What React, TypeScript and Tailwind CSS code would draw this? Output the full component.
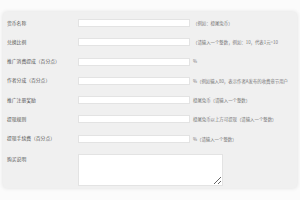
const rows = [
  { label: "货币名称", unit: "", hint: "（例如：橙尾兔币）" },
  { label: "兑换比例", unit: "", hint: "（请输入一个整数，例如：10，代表1元=10" },
  { label: "推广消费提成（百分点）", unit: "%", hint: "" },
  { label: "作者分成（百分点）", unit: "%", hint: "（例如输入80，表示作者A发布的收费章节用户" },
  { label: "推广注册奖励", unit: "橙尾兔币", hint: "（请输入一个整数）" },
  { label: "提现规则", unit: "橙尾兔币以上方可提现", hint: "（请输入一个整数）" },
  { label: "提现手续费（百分点）", unit: "%", hint: "（请输入一个整数）" },
];

export default function App() {
  return (
    <div
      className="w-[300px] h-[200px] overflow-hidden bg-[#fbfbfb] pt-[12px] px-[3px]"
      style={{ fontFamily: '"Noto Sans CJK SC", "Noto Sans", sans-serif' }}
    >
      <div className="w-[294px] rounded-[4px] bg-[#f0f0f0] shadow-[0_0_4px_rgba(0,0,0,0.12)] pl-[4px] pt-[7px] pb-[2px]">
        <div className="flex flex-col gap-[11.3px]">
          {rows.map((r) => (
            <div key={r.label} className="flex items-center h-[8px]">
              <div className="w-[71px] shrink-0 text-[4.8px] leading-none text-[#555] whitespace-nowrap">{r.label}</div>
              <input className="w-[112px] h-[8px] shrink-0 bg-white border border-[#e3e3e3] outline-none" />
              <div className="ml-[3px] text-[4.4px] leading-none text-[#777] whitespace-nowrap">
                {r.unit}
                {r.hint}
              </div>
            </div>
          ))}
          <div className="flex items-start">
            <div className="w-[71px] shrink-0 pt-[3px] text-[4.8px] leading-none text-[#555]">购买说明</div>
            <textarea className="w-[145px] h-[32px] bg-white border border-[#e3e3e3] outline-none" />
          </div>
        </div>
      </div>
    </div>
  );
}
